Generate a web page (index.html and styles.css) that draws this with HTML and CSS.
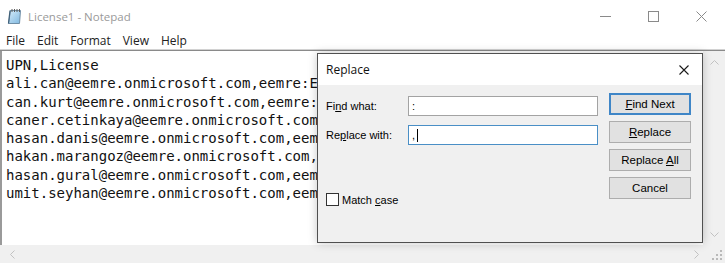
FILE: index.html
```html
<!DOCTYPE html>
<html>
<head>
<meta charset="utf-8">
<title>License1 - Notepad</title>
<link rel="stylesheet" href="styles.css">
</head>
<body>
<div class="window">
  <div class="titlebar">
    <svg class="app-icon" width="15" height="17" viewBox="0 0 15 17">
      <defs>
        <linearGradient id="pg" x1="0" y1="0" x2="1" y2="1">
          <stop offset="0" stop-color="#d6ecfa"/>
          <stop offset="1" stop-color="#7fb8e0"/>
        </linearGradient>
      </defs>
      <path d="M3.5 2.5 H13.5 L12.5 15.5 H1.5 Z" fill="url(#pg)" stroke="#6f8ea6" stroke-width="1"/>
      <path d="M3 2.5 L1.5 15.5" stroke="#3f5f78" stroke-width="1.2"/>
      <g stroke="#5b5b5b" stroke-width="1">
        <line x1="5" y1="1" x2="5" y2="4"/>
        <line x1="7.5" y1="1" x2="7.5" y2="4"/>
        <line x1="10" y1="1" x2="10" y2="4"/>
        <line x1="12.5" y1="1" x2="12.5" y2="4"/>
      </g>
    </svg>
    <span class="title">License1 - Notepad</span>
    <div class="controls">
      <span class="ctl"><svg width="11" height="1" viewBox="0 0 11 1"><rect width="11" height="1" fill="#8a8a8a"/></svg></span>
      <span class="ctl"><svg width="11" height="11" viewBox="0 0 11 11"><rect x="0.5" y="0.5" width="10" height="10" fill="none" stroke="#8a8a8a"/></svg></span>
      <span class="ctl"><svg width="11" height="11" viewBox="0 0 11 11"><path d="M0.5 0.5 L10.5 10.5 M10.5 0.5 L0.5 10.5" stroke="#8a8a8a" stroke-width="1"/></svg></span>
    </div>
  </div>
  <div class="menubar">
    <span>File</span><span>Edit</span><span>Format</span><span>View</span><span>Help</span>
  </div>
  <div class="editor">
    <pre class="text">UPN,License
ali.can@eemre.onmicrosoft.com,eemre:E
can.kurt@eemre.onmicrosoft.com,eemre:
caner.cetinkaya@eemre.onmicrosoft.com
hasan.danis@eemre.onmicrosoft.com,eem
hakan.marangoz@eemre.onmicrosoft.com,
hasan.gural@eemre.onmicrosoft.com,eem
umit.seyhan@eemre.onmicrosoft.com,eem</pre>
    <div class="vscroll">
      <svg width="9" height="5" viewBox="0 0 9 5"><path d="M0.5 4.5 L4.5 0.5 L8.5 4.5" fill="none" stroke="#c2c2c2"/></svg>
      <svg width="9" height="5" viewBox="0 0 9 5"><path d="M0.5 0.5 L4.5 4.5 L8.5 0.5" fill="none" stroke="#c2c2c2"/></svg>
    </div>
    <div class="hscroll">
      <svg width="5" height="9" viewBox="0 0 5 9"><path d="M4.5 0.5 L0.5 4.5 L4.5 8.5" fill="none" stroke="#c2c2c2"/></svg>
      <svg width="5" height="9" viewBox="0 0 5 9"><path d="M0.5 0.5 L4.5 4.5 L0.5 8.5" fill="none" stroke="#c2c2c2"/></svg>
    </div>
    <div class="corner">
      <svg width="10" height="10" viewBox="0 0 10 10" fill="#b9b9b9">
        <rect x="8" y="0" width="2" height="2"/>
        <rect x="4" y="4" width="2" height="2"/><rect x="8" y="4" width="2" height="2"/>
        <rect x="0" y="8" width="2" height="2"/><rect x="4" y="8" width="2" height="2"/><rect x="8" y="8" width="2" height="2"/>
      </svg>
    </div>
  </div>

  <div class="dialog">
    <div class="dlg-title">
      <span>Replace</span>
      <svg class="dlg-close" width="10" height="10" viewBox="0 0 10 10"><path d="M0.5 0.5 L9.5 9.5 M9.5 0.5 L0.5 9.5" stroke="#1a1a1a" stroke-width="1.1"/></svg>
    </div>
    <div class="dlg-body">
      <div class="fields">
        <div class="row row-first">
          <span class="label"><span>Fi</span><span class="ak">n</span><span>d what:</span></span>
          <div class="field"><span>:</span></div>
        </div>
        <div class="row">
          <span class="label"><span>Re</span><span class="ak">p</span><span>lace with:</span></span>
          <div class="field focused"><span>,</span><span class="caret"></span></div>
        </div>
        <div class="check-row">
          <span class="checkbox"></span>
          <span class="label"><span>Match </span><span class="ak">c</span><span>ase</span></span>
        </div>
      </div>
      <div class="buttons">
        <div class="btn default"><span><span class="ak">F</span><span>ind Next</span></span></div>
        <div class="btn"><span><span class="ak">R</span><span>eplace</span></span></div>
        <div class="btn"><span><span>Replace </span><span class="ak">A</span><span>ll</span></span></div>
        <div class="btn"><span>Cancel</span></div>
      </div>
    </div>
  </div>
</div>
</body>
</html>
```

FILE: styles.css
```css
* { box-sizing: border-box; }
html, body { margin: 0; padding: 0; }
body {
  width: 725px;
  height: 263px;
  overflow: hidden;
  background: #ffffff;
  font-family: "Open Sans", "Noto Sans", sans-serif;
}
.window {
  position: relative;
  width: 725px;
  height: 263px;
  display: flex;
  flex-direction: column;
}
.titlebar {
  flex: none;
  height: 32px;
  display: flex;
  align-items: center;
}
.app-icon { margin-left: 7px; margin-top: 1px; }
.title {
  margin-left: 6px;
  font-size: 11.5px;
  color: #9a9a9a;
}
.controls {
  margin-left: auto;
  align-self: stretch;
  display: flex;
}
.ctl {
  width: 48px;
  display: flex;
  align-items: center;
  justify-content: center;
}
.menubar {
  flex: none;
  height: 18px;
  display: flex;
  font-size: 12px;
  line-height: 18px;
  color: #222;
}
.menubar span { padding: 0 6px; }

.editor {
  flex: 1;
  min-height: 0;
  display: grid;
  grid-template-columns: 1fr 22px;
  grid-template-rows: 1fr 18px;
  border-top: 1px solid #8a8a8a;
  box-shadow: 0 -1px 0 #d2d2d2;
}
.text {
  margin: 0;
  min-width: 0;
  overflow: hidden;
  border-left: 2px solid #9a9a9a;
  padding: 5px 0 0 4px;
  font-family: "DejaVu Sans Mono", "Liberation Mono", monospace;
  font-size: 14px;
  line-height: 18.3px;
  color: #111;
  white-space: pre;
}
.vscroll {
  background: #f0f0f0;
  display: flex;
  flex-direction: column;
  align-items: center;
  justify-content: space-between;
  padding: 9px 0 8px;
}
.hscroll {
  background: #f0f0f0;
  display: flex;
  align-items: center;
  justify-content: space-between;
  padding: 0 4px 0 10px;
}
.corner {
  background: #f0f0f0;
  display: flex;
  align-items: flex-end;
  justify-content: flex-end;
  padding: 0 3px 3px 0;
}

/* Replace dialog */
.dialog {
  position: absolute;
  left: 317px;
  top: 53px;
  width: 386px;
  height: 190px;
  border: 1px solid #505050;
  background: #f0f0f0;
  box-shadow: 0 0 9px rgba(0, 0, 0, 0.22);
  display: flex;
  flex-direction: column;
}
.dlg-title {
  flex: none;
  height: 31px;
  background: #ffffff;
  display: flex;
  align-items: center;
  padding: 0 13px 0 8px;
  font-size: 12px;
  color: #111;
}
.dlg-close { margin-left: auto; }
.dlg-body {
  flex: 1;
  display: flex;
  padding: 8px 11px 0 8px;
  font-family: "Liberation Sans", Arial, sans-serif;
  color: #000;
}
.fields {
  flex: 1;
  display: flex;
  flex-direction: column;
}
.row {
  display: flex;
  align-items: center;
  height: 20px;
  margin-top: 9px;
}
.row-first { margin-top: 3px; }
.label {
  font-size: 11px;
  white-space: pre;
}
.ak { text-decoration: underline; }
.row .label { width: 82px; flex: none; }
.field {
  width: 190px;
  height: 20px;
  background: #fff;
  border: 1px solid #a3a3a3;
  font-size: 11px;
  line-height: 18px;
  padding-left: 3px;
  display: flex;
  align-items: center;
}
.field.focused { border-color: #4a8fc6; }
.caret {
  display: inline-block;
  width: 1px;
  height: 13px;
  background: #000;
  margin-left: 2px;
}
.check-row {
  display: flex;
  align-items: center;
  margin-top: 48px;
  gap: 3px;
}
.checkbox {
  width: 13px;
  height: 13px;
  background: #fff;
  border: 1px solid #333;
}
.buttons {
  flex: none;
  width: 82px;
  display: flex;
  flex-direction: column;
  gap: 6px;
}
.btn {
  height: 22px;
  background: #e1e1e1;
  border: 1px solid #adadad;
  display: flex;
  align-items: center;
  justify-content: center;
  font-size: 11.5px;
  color: #000;
  white-space: pre;
}
.btn.default {
  border-color: #3f86c7;
  box-shadow: inset 0 0 0 1px #3f86c7;
}
```
